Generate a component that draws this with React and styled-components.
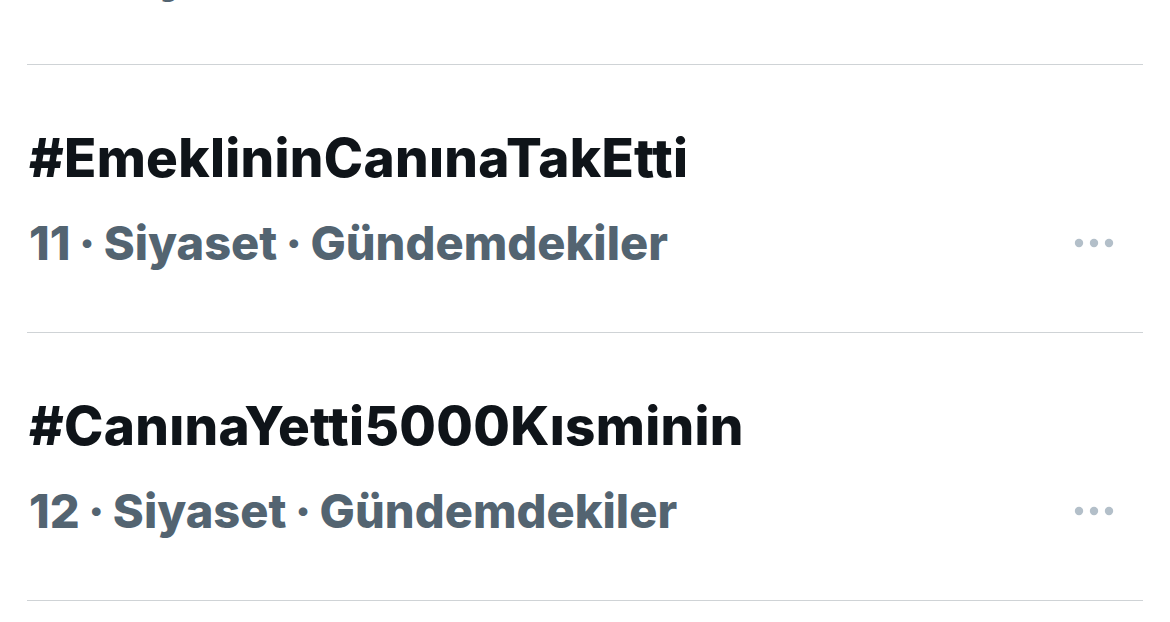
import React from "react";
import styled, { createGlobalStyle } from "styled-components";

const GlobalStyle = createGlobalStyle`
  html, body {
    margin: 0;
    padding: 0;
    background: #ffffff;
    overflow: hidden;
  }
  body {
    font-family: Inter, "Noto Sans", "Liberation Sans", sans-serif;
    -webkit-font-smoothing: antialiased;
  }
`;

const List = styled.div`
  padding: 0 27px;
  height: 622px;
  overflow: hidden;
`;

const Row = styled.div`
  display: flex;
  flex-direction: column;
  padding: 63px 0 59px 2px;
  border-bottom: 1px solid #cfd3d6;
  margin-top: ${(p) => (p.$first ? "-203px" : "0")};
`;

const Title = styled.div`
  font-size: 53px;
  line-height: 60px;
  font-weight: 800;
  letter-spacing: 0.3px;
  color: #0f1419;
  white-space: nowrap;
`;

const MetaRow = styled.div`
  display: flex;
  align-items: center;
  justify-content: space-between;
  margin-top: 25px;
`;

const Meta = styled.div`
  font-size: 47px;
  line-height: 60px;
  font-weight: 800;
  word-spacing: -2px;
  color: #536471;
  white-space: nowrap;
`;

const MoreButton = styled.div`
  display: flex;
  align-items: center;
  margin-right: 28px;
`;

const MoreIcon = () => (
  <svg width="42" height="10" viewBox="0 0 42 10">
    <circle cx="6" cy="5" r="4.2" fill="#b3bfc9" />
    <circle cx="21" cy="5" r="4.2" fill="#b3bfc9" />
    <circle cx="36" cy="5" r="4.2" fill="#b3bfc9" />
  </svg>
);

const trends = [
  { rank: 10, tag: "#Gündem", category: "Siyaset" },
  { rank: 11, tag: "#EmeklininCanınaTakEtti", category: "Siyaset" },
  { rank: 12, tag: "#CanınaYetti5000Kısminin", category: "Siyaset" },
];

export default function App() {
  return (
    <>
      <GlobalStyle />
      <List>
        {trends.map((t, i) => (
          <Row key={t.rank} $first={i === 0}>
            <Title>{t.tag}</Title>
            <MetaRow>
              <Meta>
                {t.rank} · {t.category} · Gündemdekiler
              </Meta>
              <MoreButton>
                <MoreIcon />
              </MoreButton>
            </MetaRow>
          </Row>
        ))}
      </List>
    </>
  );
}
